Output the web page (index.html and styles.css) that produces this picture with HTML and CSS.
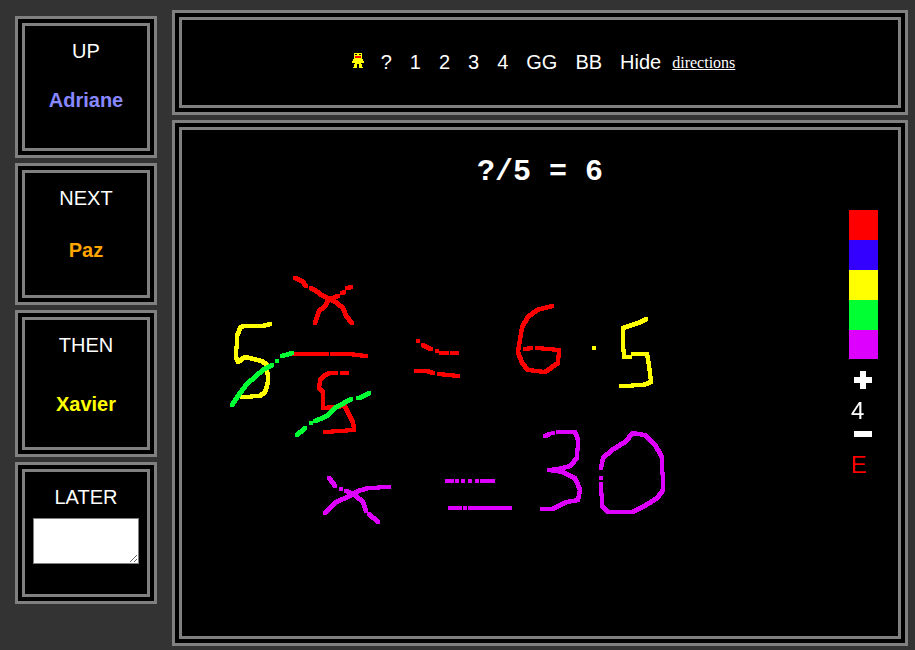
FILE: index.html
```html
<!DOCTYPE html>
<html lang="en">
<head>
<meta charset="utf-8">
<title>Board</title>
<link rel="stylesheet" href="styles.css">
</head>
<body>
<div class="app">
  <aside class="queue">
    <section class="frame card">
      <div class="frame-inner card-up">
        <div class="label">UP</div>
        <div class="name name-up">Adriane</div>
      </div>
    </section>
    <section class="frame card">
      <div class="frame-inner card-next">
        <div class="label">NEXT</div>
        <div class="name name-next">Paz</div>
      </div>
    </section>
    <section class="frame card card-tall">
      <div class="frame-inner card-then">
        <div class="label">THEN</div>
        <div class="name name-then">Xavier</div>
      </div>
    </section>
    <section class="frame card">
      <div class="frame-inner card-later">
        <div class="label">LATER</div>
        <textarea class="later-input"></textarea>
      </div>
    </section>
  </aside>
  <main class="content">
    <header class="frame toolbar">
      <nav class="frame-inner toolbar-inner">
        <svg class="mascot" width="12" height="15" viewBox="0 0 12 15" shape-rendering="crispEdges" aria-hidden="true">
          <rect class="px-y" x="2" y="0" width="8" height="6"/>
          <rect class="px-k" x="3" y="1" width="2" height="1"/>
          <rect class="px-k" x="7" y="1" width="2" height="1"/>
          <rect class="px-r" x="3" y="3" width="6" height="2"/>
          <rect class="px-y" x="1" y="6" width="10" height="2"/>
          <rect class="px-y" x="0" y="8" width="12" height="2"/>
          <rect class="px-y" x="3" y="10" width="6" height="1"/>
          <rect class="px-y" x="2" y="11" width="3" height="3"/>
          <rect class="px-y" x="7" y="11" width="3" height="3"/>
          <rect class="px-y" x="1" y="14" width="4" height="1"/>
          <rect class="px-y" x="7" y="14" width="4" height="1"/>
        </svg>
        <span class="tool">?</span>
        <span class="tool">1</span>
        <span class="tool">2</span>
        <span class="tool">3</span>
        <span class="tool">4</span>
        <span class="tool">GG</span>
        <span class="tool">BB</span>
        <span class="tool">Hide</span>
        <a class="directions" href="#">directions</a>
      </nav>
    </header>
    <section class="frame board">
      <div class="frame-inner board-inner">
        <canvas class="sketch" id="sketch" width="716" height="506"></canvas>
        <h1 class="problem">?/5 = 6</h1>
        <div class="palette">
          <div class="swatch swatch-red"></div>
          <div class="swatch swatch-blue"></div>
          <div class="swatch swatch-yellow"></div>
          <div class="swatch swatch-green"></div>
          <div class="swatch swatch-purple"></div>
          <div class="plus"></div>
          <div class="size">4</div>
          <div class="minus"></div>
          <div class="eraser">E</div>
        </div>
      </div>
    </section>
  </main>
</div>
<script src="script.js"></script>
</body>
</html>
```
FILE: styles.css
```css
* { box-sizing: border-box; }
html, body { margin: 0; height: 100%; }
body {
  background: #333333;
  color: #ffffff;
  font-family: "Liberation Sans", Arial, sans-serif;
  overflow: hidden;
}
.app {
  display: flex;
  gap: 15px;
  padding: 10px 7px 0 15px;
}
.frame {
  background: #000000;
  border: 3px solid #808080;
  padding: 4px;
}
.frame-inner {
  border: 3px solid #808080;
  height: 100%;
}
.queue {
  display: flex;
  flex-direction: column;
  gap: 5px;
  width: 142px;
  margin-top: 6px;
  flex: none;
}
.card { height: 142px; }
.card-tall { height: 147px; }
.frame-inner.card-up,
.frame-inner.card-next,
.frame-inner.card-then,
.frame-inner.card-later {
  display: flex;
  flex-direction: column;
  align-items: center;
  text-align: center;
}
.card-up { padding-top: 14px; }
.card-next { padding-top: 14px; }
.card-then { padding-top: 14px; }
.card-later { padding-top: 14px; }
.label, .name { font-size: 20px; line-height: 23px; }
.name { font-weight: bold; }
.name-up { color: #8888ff; margin-top: 26px; }
.name-next { color: #ffa500; margin-top: 29px; }
.name-then { color: #ffff00; margin-top: 36px; }
.later-input {
  display: block;
  width: 106px;
  height: 46px;
  margin: 9px 0 0;
  background: #ffffff;
  border: 1px solid #808080;
  padding: 2px;
}
.content {
  flex: 1;
  display: flex;
  flex-direction: column;
  gap: 5px;
  min-width: 0;
}
.toolbar { height: 105px; }
.toolbar-inner {
  display: flex;
  align-items: center;
  justify-content: center;
  gap: 18px;
  padding-left: 7px;
  padding-bottom: 1px;
}
.tool { font-size: 20px; line-height: 23px; }
.mascot { display: block; margin: -3px -1px 0 0; flex: none; }
.px-y { fill: #ffff00; }
.px-k { fill: #000000; }
.px-r { fill: #ff0000; }
.directions {
  color: #ffffff;
  font-family: "Liberation Serif", "Times New Roman", serif;
  font-size: 16px;
  margin-left: -7px;
  position: relative;
  top: 1px;
}
.board { height: 526px; }
.board-inner { position: relative; }
.problem {
  margin: 0;
  padding-top: 25px;
  font-family: "Liberation Mono", "Courier New", monospace;
  font-size: 30px;
  line-height: 34px;
  font-weight: bold;
  text-align: center;
}
.sketch {
  position: absolute;
  inset: 0;
  display: block;
}
.palette {
  position: absolute;
  top: 80px;
  left: 667px;
  width: 29px;
}
.swatch { height: 30px; }
.swatch-purple { height: 29px; }
.swatch-red { background: #ff0000; }
.swatch-blue { background: #3300ff; }
.swatch-yellow { background: #ffff00; }
.swatch-green { background: #00ff33; }
.swatch-purple { background: #dd00ff; }
.plus, .minus {
  position: relative;
  width: 18px;
  height: 18px;
  margin-left: 5px;
}
.plus { margin-top: 12px; }
.plus::before, .minus::before {
  content: "";
  position: absolute;
  left: 0;
  top: 6px;
  width: 18px;
  height: 6px;
  background: #ffffff;
}
.plus::after {
  content: "";
  position: absolute;
  left: 6px;
  top: 0;
  width: 6px;
  height: 18px;
  background: #ffffff;
}
.minus { height: 6px; margin-top: 6px; }
.minus::before { top: 0; }
.size, .eraser {
  font-size: 24px;
  line-height: 28px;
  margin-left: 2px;
}
.size { margin-top: 8px; color: #ffffff; }
.eraser { margin-top: 14px; color: #ff0000; }
```
FILE: script.js
```js
// Replays the pen strokes on the board. Coordinates are page pixels.
var ORIGIN_X = 182, ORIGIN_Y = 130, PEN = 4;
var STROKES = {
  "#ff0000": [
    [295,278, 302,281, 306,286],
    [311,288, 315,290, 323,296, 330,299, 337,303, 343,308, 346,316, 352,323],
    [351,287, 347,288],
    [344,292, 342,293],
    [338,296, 328,300, 325,306, 319,311, 317,317, 315,323],
    [290,354, 327,354],
    [332,354, 350,354, 366,356],
    [347,373, 342,373],
    [336,373, 330,373, 325,375, 320,380, 319,388, 323,392, 323,408, 345,406, 348,413, 353,422, 354,430, 325,432],
    [418,341],
    [423,345, 427,347, 431,349],
    [437,351],
    [441,353, 447,353],
    [452,353, 457,353],
    [416,371, 427,371, 433,373],
    [439,374, 458,376],
    [552,306, 537,310, 528,317, 522,327, 518,352, 522,363, 528,370, 545,372, 558,363, 559,350, 537,348],
    [531,348, 525,349]
  ],
  "#ffff00": [
    [270,324, 262,326, 243,326, 240,328, 237,336, 236,358, 238,362, 245,357, 262,361, 267,365, 268,382, 265,392, 260,396, 242,397],
    [594,348],
    [646,319, 638,323, 623,328, 623,345, 624,357, 630,357],
    [633,354, 647,354, 649,365, 651,382, 643,385, 621,386]
  ],
  "#00ff33": [
    [292,353, 282,356],
    [277,361],
    [272,365, 263,370, 257,375, 247,384, 240,393, 232,405],
    [369,393, 362,397, 358,398],
    [351,399, 335,408, 327,416, 315,421],
    [311,423],
    [305,428, 297,435]
  ],
  "#dd00ff": [
    [329,478, 335,486],
    [341,489],
    [346,491, 355,495, 363,502, 366,511],
    [369,514, 378,522],
    [389,487, 368,488, 358,491, 352,495, 343,499, 336,502, 325,513],
    [447,481, 452,481],
    [457,481],
    [463,481],
    [470,481],
    [477,481],
    [482,481, 493,481],
    [450,508, 460,508],
    [465,508],
    [470,508, 510,508],
    [545,436, 549,434],
    [553,433],
    [558,432, 575,432, 578,440, 577,458, 570,466, 558,469, 549,470, 563,472, 575,478, 580,490, 578,500, 567,502, 552,509, 542,509],
    [601,468, 603,458, 612,450, 625,442, 633,433, 645,435, 655,445, 662,457, 663,490, 657,498, 643,507, 632,512, 608,512, 602,506, 601,484],
    [601,478]
  ]
};

var ctx = document.getElementById("sketch").getContext("2d");

function stamp(x, y) {
  ctx.fillRect(Math.round(x - ORIGIN_X - PEN / 2), Math.round(y - ORIGIN_Y - PEN / 2), PEN, PEN);
}

Object.keys(STROKES).forEach(function (colour) {
  ctx.fillStyle = colour;
  STROKES[colour].forEach(function (p) {
    stamp(p[0], p[1]);
    for (var i = 2; i < p.length; i += 2) {
      var dx = p[i] - p[i - 2], dy = p[i + 1] - p[i - 1];
      var steps = Math.max(Math.abs(dx), Math.abs(dy));
      for (var s = 1; s <= steps; s++) {
        stamp(p[i - 2] + dx * s / steps, p[i - 1] + dy * s / steps);
      }
    }
  });
});
```
